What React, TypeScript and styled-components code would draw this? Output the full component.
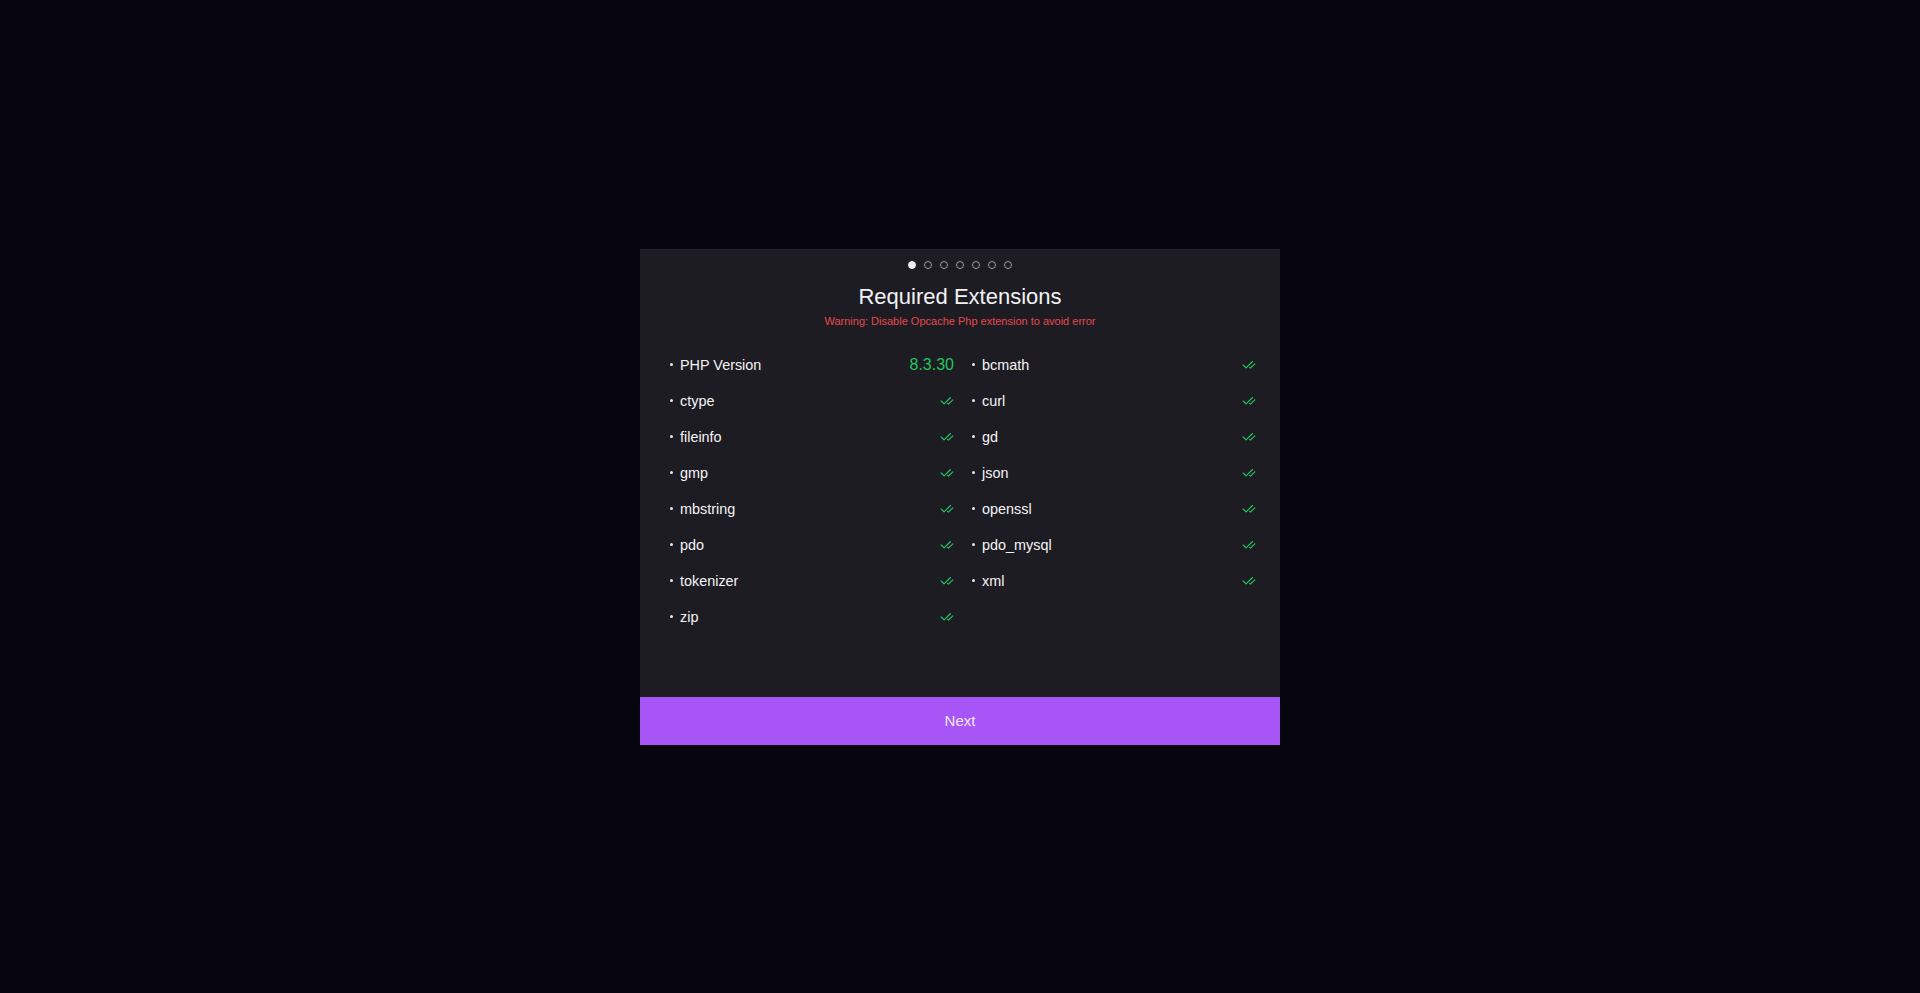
import React from "react";
import styled, { createGlobalStyle } from "styled-components";
import { CheckCheck } from "lucide-react";

const GlobalStyle = createGlobalStyle`
  html, body { margin: 0; padding: 0; background: #07050d; }
  body { font-family: "Liberation Sans", Arial, sans-serif; }
  * { box-sizing: border-box; }
`;

const Page = styled.div`
  width: 100vw;
  height: 100vh;
  display: flex;
  align-items: center;
  justify-content: center;
  background: #07050d;
`;

const Card = styled.div`
  width: 640px;
  height: 496px;
  background: #1e1c23;
  border-top: 1px solid #26242b;
  display: flex;
  flex-direction: column;
`;

const Body = styled.div`
  flex: 1;
  padding: 11px 24px 0;
  display: flex;
  flex-direction: column;
  align-items: center;
`;

const Steps = styled.div`
  display: flex;
  gap: 8px;
  height: 8px;
  align-items: center;
`;

const Step = styled.span<{ $active?: boolean }>`
  width: 8px;
  height: 8px;
  border-radius: 50%;
  background: ${(p) => (p.$active ? "#ececef" : "transparent")};
  border: 1px solid ${(p) => (p.$active ? "#ececef" : "#9c9aa3")};
`;

const Title = styled.h1`
  margin: 12px 0 0;
  font-size: 22px;
  line-height: 32px;
  font-weight: 400;
  color: #f2f2f4;
`;

const Warning = styled.p`
  margin: 0;
  font-size: 11px;
  line-height: 16px;
  color: #e5484d;
`;

const List = styled.ul`
  list-style: none;
  margin: 18px 0 0;
  padding: 0;
  width: 100%;
  display: grid;
  grid-template-columns: 1fr 1fr;
  column-gap: 12px;
`;

const Row = styled.li`
  height: 36px;
  display: flex;
  align-items: center;
  padding-left: 6px;
  font-size: 14.4px;
  color: #f4f4f5;
`;

const Bullet = styled.span`
  width: 3px;
  height: 3px;
  border-radius: 50%;
  background: #e8e8ea;
  margin-right: 7px;
  flex-shrink: 0;
`;

const Name = styled.span`
  flex: 1;
`;

const Value = styled.span`
  font-size: 16px;
  color: #22c55e;
`;

const Check = styled(CheckCheck)`
  color: #22c55e;
  flex-shrink: 0;
`;

const NextButton = styled.button`
  height: 48px;
  width: 100%;
  border: none;
  background: #a855f7;
  color: #f3e8ff;
  font-family: "Liberation Sans", Arial, sans-serif;
  font-size: 15px;
  cursor: pointer;
`;

const items: { name: string; value?: string }[] = [
  { name: "PHP Version", value: "8.3.30" },
  { name: "bcmath" },
  { name: "ctype" },
  { name: "curl" },
  { name: "fileinfo" },
  { name: "gd" },
  { name: "gmp" },
  { name: "json" },
  { name: "mbstring" },
  { name: "openssl" },
  { name: "pdo" },
  { name: "pdo_mysql" },
  { name: "tokenizer" },
  { name: "xml" },
  { name: "zip" },
];

export default function App() {
  return (
    <>
      <GlobalStyle />
      <Page>
        <Card>
          <Body>
            <Steps>
              {Array.from({ length: 7 }).map((_, i) => (
                <Step key={i} $active={i === 0} />
              ))}
            </Steps>
            <Title>Required Extensions</Title>
            <Warning>Warning: Disable Opcache Php extension to avoid error</Warning>
            <List>
              {items.map((it) => (
                <Row key={it.name}>
                  <Bullet />
                  <Name>{it.name}</Name>
                  {it.value ? <Value>{it.value}</Value> : <Check size={14} strokeWidth={2} />}
                </Row>
              ))}
            </List>
          </Body>
          <NextButton>Next</NextButton>
        </Card>
      </Page>
    </>
  );
}
